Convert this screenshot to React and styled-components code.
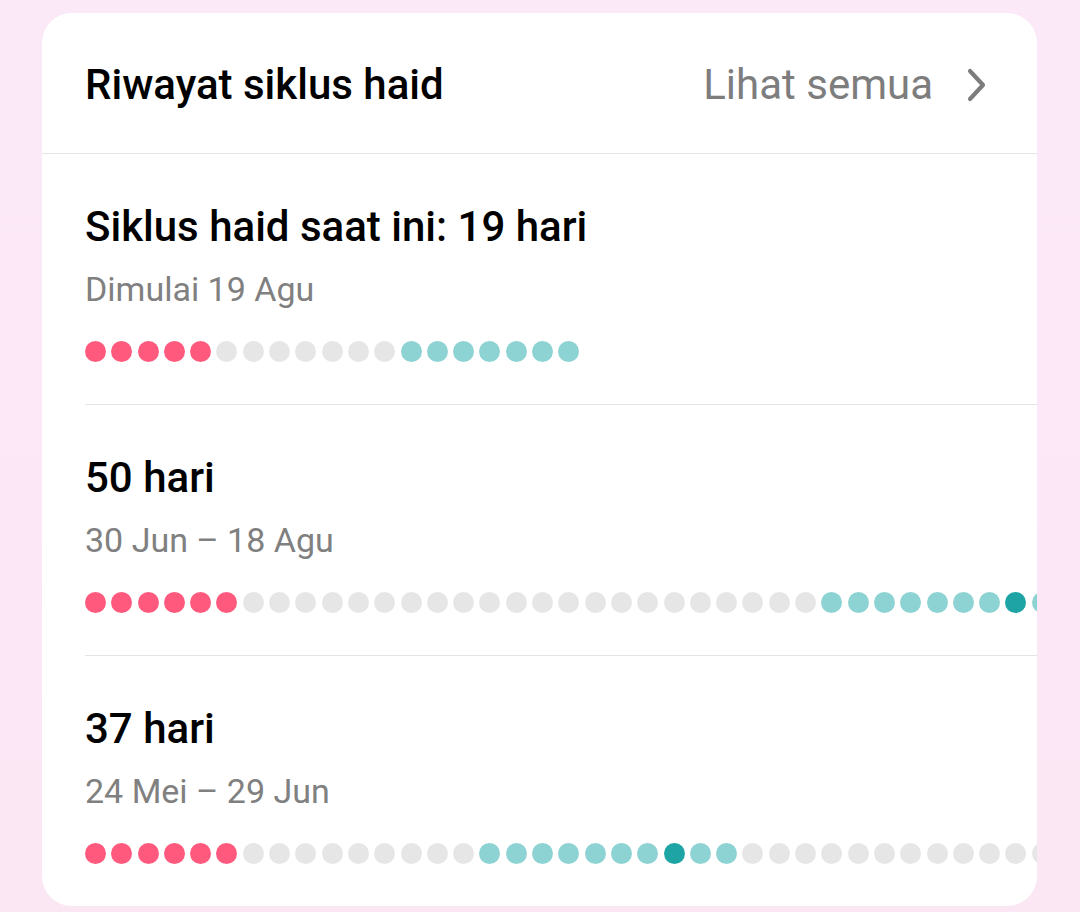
import styled, { createGlobalStyle } from "styled-components";

const GlobalStyle = createGlobalStyle`
  html, body {
    margin: 0;
    padding: 0;
    background: #fce8f7;
    font-family: Roboto, "Noto Sans", sans-serif;
  }
`;

const COLORS = {
  p: "#ff5a7e",
  g: "#e6e6e6",
  t: "#8ed3d3",
  d: "#1ea4a4",
};

// build a dot pattern from runs like [["p", 5], ["g", 7]]
const build = (runs) => runs.flatMap(([c, n]) => Array(n).fill(c));

const cycles = [
  {
    title: "Siklus haid saat ini: 19 hari",
    sub: "Dimulai 19 Agu",
    dots: build([["p", 5], ["g", 7], ["t", 7]]),
  },
  {
    title: "50 hari",
    sub: "30 Jun – 18 Agu",
    dots: build([["p", 6], ["g", 22], ["t", 7], ["d", 1], ["t", 2], ["g", 12]]),
  },
  {
    title: "37 hari",
    sub: "24 Mei – 29 Jun",
    dots: build([["p", 6], ["g", 9], ["t", 7], ["d", 1], ["t", 2], ["g", 12]]),
  },
];

export default function App() {
  return (
    <Page>
      <GlobalStyle />
      <Card>
        <Header>
          <HeaderTitle>Riwayat siklus haid</HeaderTitle>
          <SeeAll>
            Lihat semua
            <svg width="24" height="38" viewBox="0 0 24 38" fill="none">
              <path
                d="M5 5 L18 19 L5 33"
                stroke="#7d7d7d"
                strokeWidth="4.2"
                strokeLinecap="round"
                strokeLinejoin="round"
              />
            </svg>
          </SeeAll>
        </Header>
        {cycles.map((c, i) => (
          <Row key={i} $last={i === cycles.length - 1}>
            <RowTitle>{c.title}</RowTitle>
            <RowSub>{c.sub}</RowSub>
            <Dots>
              {c.dots.map((d, j) => (
                <Dot key={j} $color={COLORS[d]} />
              ))}
            </Dots>
          </Row>
        ))}
      </Card>
    </Page>
  );
}

const Page = styled.div`
  min-height: 912px;
  padding: 13px 43px 0 42px;
  box-sizing: border-box;
  background: linear-gradient(180deg, #fce9f8 0%, #fbe6f4 100%);
`;

const Card = styled.div`
  background: #ffffff;
  border-radius: 30px;
  overflow: hidden;
  height: 893px;
`;

const Header = styled.div`
  height: 141px;
  box-sizing: border-box;
  display: flex;
  align-items: center;
  justify-content: space-between;
  padding: 3px 48px 0 43px;
  border-bottom: 1.5px solid #e4e4e4;
`;

const HeaderTitle = styled.div`
  font-size: 42px;
  line-height: 48px;
  font-weight: 500;
  color: #000;
`;

const SeeAll = styled.div`
  display: flex;
  align-items: center;
  gap: 32px;
  font-size: 42px;
  line-height: 48px;
  color: #7d7d7d;
`;

const Row = styled.div`
  height: 251px;
  box-sizing: border-box;
  margin-left: 43px;
  padding-top: 49px;
  border-bottom: ${(p) => (p.$last ? "none" : "1.5px solid #e4e4e4")};
`;

const RowTitle = styled.div`
  font-size: 42px;
  font-weight: 500;
  color: #000;
  line-height: 48px;
`;

const RowSub = styled.div`
  margin-top: 18px;
  font-size: 34px;
  color: #808080;
  line-height: 40px;
`;

const Dots = styled.div`
  margin-top: 32px;
  display: flex;
  gap: 5.3px;
  white-space: nowrap;
`;

const Dot = styled.span`
  flex: none;
  width: 21px;
  height: 21px;
  border-radius: 50%;
  background: ${(p) => p.$color};
`;
